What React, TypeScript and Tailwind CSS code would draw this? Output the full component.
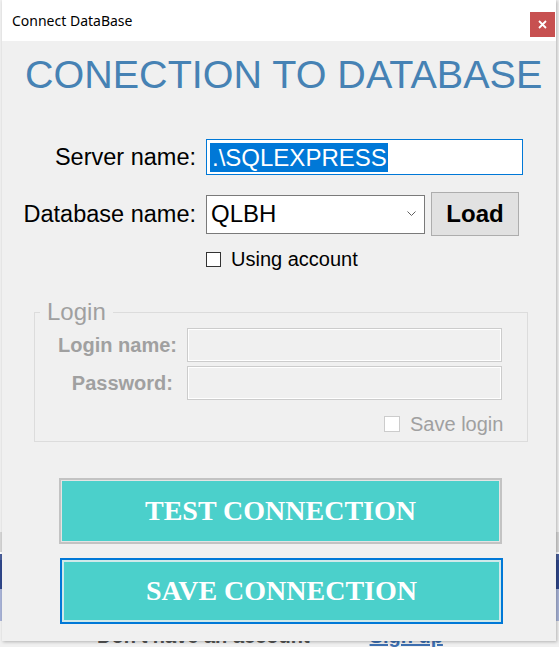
export default function App() {
  return (
    <div className="relative w-[559px] h-[647px] overflow-hidden bg-[#f0f0f0] font-['Liberation_Sans',Arial,sans-serif]">
      {/* window behind the dialog */}
      <div className="absolute inset-0 flex flex-col">
        <div className="h-[540px] bg-[#f0f0f0]" />
        <div className="h-[20px] bg-[#d6d6d6]" />
        <div className="h-[2px] bg-white" />
        <div className="h-[6px] bg-[#4a5f9a]" />
        <div className="h-[30px] bg-[#30478a]" />
        <div className="h-[32px] bg-[#a8b3d7]" />
        <div className="flex-1 bg-[#f0f0f0] flex items-start pt-[4px] pl-[97px] gap-[60px]">
          <span className="text-[20px] font-bold text-[#555555] leading-[22px]">Don't have an account</span>
          <span className="text-[20px] font-bold text-[#3d6fb0] leading-[22px] underline">Sign up</span>
        </div>
      </div>

      {/* dialog window */}
      <div className="absolute left-[2px] top-0 w-[554px] h-[641px] bg-[#f0f0f0] shadow-[1px_1px_3px_rgba(0,0,0,0.25)] flex flex-col">
        <div className="h-[41px] bg-white flex justify-between items-start">
          <span className="pl-[10px] pt-[11px] text-[14px] leading-[20px] text-black font-['Noto_Sans',sans-serif]">Connect DataBase</span>
          <div className="mt-[12px] mr-[1px] w-[25px] h-[25px] bg-[#c75050] flex items-center justify-center">
            <svg width="9" height="9" viewBox="0 0 9 9">
              <path d="M1 1 L8 8 M8 1 L1 8" stroke="#ffffff" strokeWidth="1.8" />
            </svg>
          </div>
        </div>

        <h1 className="mt-[14px] pl-[23px] text-[39.5px] leading-[38px] text-[#4682b4] whitespace-nowrap">
          CONECTION TO DATABASE
        </h1>

        {/* server */}
        <div className="mt-[46px] flex items-center">
          <span className="w-[194px] text-right text-[23.5px] text-black leading-[28px]">Server name:</span>
          <div className="ml-[10px] w-[317px] h-[36px] border border-[#0078d7] bg-white pl-[3px] pt-[3px]">
            <span className="inline-block h-[29px] leading-[29px] bg-[#0078d7] text-white text-[24px] pl-[2px] pr-[1px]">.\SQLEXPRESS</span>
          </div>
        </div>

        {/* database */}
        <div className="mt-[17px] flex items-center">
          <span className="w-[194px] text-right text-[23.5px] text-black leading-[28px]">Database name:</span>
          <div className="ml-[10px] w-[219px] h-[39px] border border-[#7a7a7a] bg-white flex items-center pl-[4px] pr-[8px]">
            <span className="flex-1 text-[24px] leading-[28px] text-black">QLBH</span>
            <svg width="9" height="6" viewBox="0 0 9 6">
              <path d="M0.5 0.5 L4.5 4.5 L8.5 0.5" fill="none" stroke="#606060" strokeWidth="1" />
            </svg>
          </div>
          <button className="ml-[6px] w-[88px] h-[44px] bg-[#e1e1e1] border border-[#adadad] text-[24px] font-bold text-black leading-[28px]">
            Load
          </button>
        </div>

        {/* using account */}
        <div className="mt-[13px] pl-[204px] flex items-center h-[20px]">
          <span className="w-[15px] h-[15px] border border-[#333333] bg-white" />
          <span className="ml-[10px] text-[20px] leading-[20px] text-black">Using account</span>
        </div>

        {/* login group */}
        <fieldset className="mt-[31px] ml-[32px] w-[494px] border border-[#dcdcdc] px-0 pt-[4px] pb-[7px]">
          <legend className="ml-[5px] px-[7px] text-[24px] leading-[24px] text-[#a0a0a0]">Login</legend>
          <div className="flex items-center">
            <span className="w-[142px] text-right text-[20px] font-bold text-[#a0a0a0] leading-[24px]">Login name:</span>
            <div className="ml-[10px] w-[315px] h-[34px] border border-[#cccccc] bg-[#f0f0f0] shadow-[inset_0_0_0_1px_#ffffff]" />
          </div>
          <div className="mt-[4px] flex items-center">
            <span className="w-[138px] text-right text-[20px] font-bold text-[#a0a0a0] leading-[24px]">Password:</span>
            <div className="ml-[14px] w-[315px] h-[34px] border border-[#cccccc] bg-[#f0f0f0] shadow-[inset_0_0_0_1px_#ffffff]" />
          </div>
          <div className="mt-[14px] pl-[349px] flex items-center h-[20px]">
            <span className="w-[16px] h-[16px] border border-[#cccccc] bg-white" />
            <span className="ml-[10px] text-[20px] leading-[20px] text-[#a0a0a0]">Save login</span>
          </div>
        </fieldset>

        {/* buttons */}
        <button className="mt-[36px] ml-[57px] w-[443px] h-[66px] bg-[#4bd0cb] border-2 border-[#c3c3c3] shadow-[inset_0_0_0_1px_#e4e4e4] text-white text-[28px] font-bold font-['Liberation_Serif','Times_New_Roman',serif]">
          TEST CONNECTION
        </button>
        <button className="mt-[14px] ml-[58px] w-[443px] h-[66px] bg-[#4bd0cb] border-2 border-[#0078d7] shadow-[inset_0_0_0_2px_#cfe9ea] text-white text-[28px] font-bold font-['Liberation_Serif','Times_New_Roman',serif]">
          SAVE CONNECTION
        </button>
      </div>
    </div>
  );
}
